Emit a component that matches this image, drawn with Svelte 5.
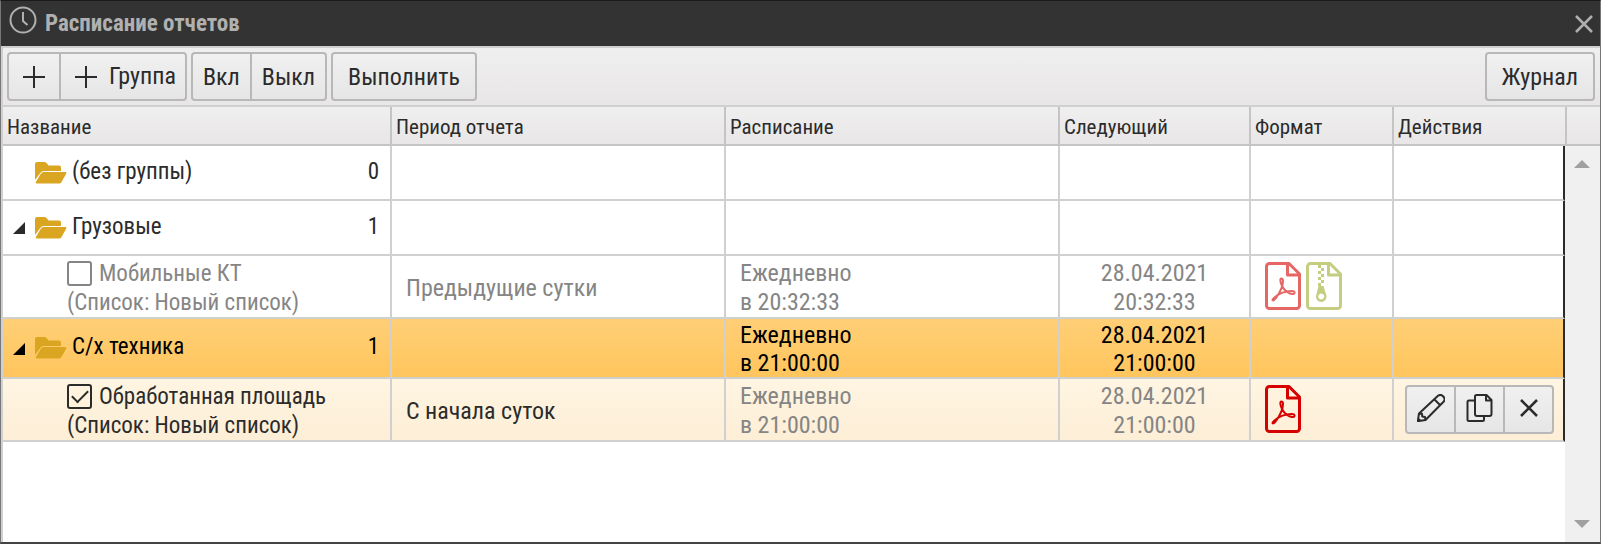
<script lang="ts">
    type Row = {
        kind: 'group' | 'item';
        name: string;
        count?: number;
        open?: boolean;
        list?: string;
        period?: string;
        time?: string;
        date?: string;
        formats?: string[];
        enabled?: boolean;
        selected?: boolean;
    };

    const columns = [
        { title: 'Название', cls: 'c-name' },
        { title: 'Период отчета', cls: 'c-period' },
        { title: 'Расписание', cls: 'c-schedule' },
        { title: 'Следующий', cls: 'c-next' },
        { title: 'Формат', cls: 'c-format' },
        { title: 'Действия', cls: 'c-actions' }
    ];

    let rows: Row[] = $state([
        { kind: 'group', name: '(без группы)', count: 0 },
        { kind: 'group', name: 'Грузовые', count: 1, open: true },
        {
            kind: 'item', name: 'Мобильные КТ', list: 'Новый список', period: 'Предыдущие сутки',
            time: '20:32:33', date: '28.04.2021', formats: ['pdf', 'zip'], enabled: false
        },
        {
            kind: 'group', name: 'С/х техника', count: 1, open: true,
            time: '21:00:00', date: '28.04.2021', selected: true
        },
        {
            kind: 'item', name: 'Обработанная площадь', list: 'Новый список', period: 'С начала суток',
            time: '21:00:00', date: '28.04.2021', formats: ['pdf'], enabled: true
        }
    ]);
</script>

{#snippet plus()}
    <svg class="plus" viewBox="0 0 22 22" aria-hidden="true"><path d="M11 0v22M0 11h22" /></svg>
{/snippet}

{#snippet pdf()}
    <svg class="file pdf" viewBox="0 0 36 48" aria-hidden="true">
        <path d="M4.500 1.500H24L34.500 12V43.500a3 3 0 0 1-3 3h-27a3 3 0 0 1-3-3v-39a3 3 0 0 1 3-3z" stroke-width="3" />
        <path d="M22.500 1.500V13H34.500" stroke-width="3" />
        <path d="M16.500 16.500C14.800 16.200 15 20 17 24C19.500 29 24.500 32.500 28 32C30.500 31.500 30 29 27 29C21 29 14 31.500 9.500 35.500C5.500 39 8.500 39.500 11 36C14.500 31 18 23.500 18 19C18 17.300 17.500 16.500 16.500 16.500z" stroke-width="2" />
    </svg>
{/snippet}

{#snippet zip()}
    <svg class="file zip" viewBox="0 0 36 48" aria-hidden="true">
        <path d="M4.500 1.500H24L34.500 12V43.500a3 3 0 0 1-3 3h-27a3 3 0 0 1-3-3v-39a3 3 0 0 1 3-3z" stroke-width="3" />
        <path d="M22.500 1.500V13H34.500" stroke-width="3" />
        <path class="fill" d="M12 3h3v3h-3zM15 6h3v3h-3zM12 9h3v3h-3zM15 12h3v3h-3zM12 15h3v3h-3zM15 18h3v3h-3zM12 21h3v3h-3z" />
        <path class="fill" fill-rule="evenodd" d="M12.500 24h5l3 10a5.300 5.300 0 1 1-10.500 0zM15.200 31.500a3 3 0 1 0 .1 0z" />
    </svg>
{/snippet}

<div class="window">
    <header class="titlebar">
        <svg class="clock" viewBox="0 0 28 28" aria-hidden="true">
            <circle cx="14" cy="14" r="12.500" />
            <path d="M14 6v9l4.500 4" />
        </svg>
        <h1>Расписание отчетов</h1>
        <button class="close" aria-label="Закрыть">
            <svg class="cross" viewBox="0 0 18 18" aria-hidden="true"><path d="M1 1l16 16M17 1L1 17" /></svg>
        </button>
    </header>

    <div class="toolbar">
        <div class="btn-group">
            <button class="btn" aria-label="Добавить">{@render plus()}</button>
            <button class="btn add-group">{@render plus()}Группа</button>
        </div>
        <div class="btn-group narrow">
            <button class="btn">Вкл</button>
            <button class="btn">Выкл</button>
        </div>
        <button class="btn">Выполнить</button>
        <button class="btn journal">Журнал</button>
    </div>

    <div class="grid">
        <div class="table-area">
            <table>
                <thead>
                    <tr>
                        {#each columns as col}
                            <th class={col.cls}>{col.title}</th>
                        {/each}
                    </tr>
                </thead>
                <tbody>
                    {#each rows as row}
                        <tr class={row.kind} class:selected={row.selected} class:enabled={row.enabled}>
                            <td class="name">
                                {#if row.kind === 'group'}
                                    <div class="group-name">
                                        <svg class="arrow" viewBox="0 0 12 12" aria-hidden="true">
                                            {#if row.open}<path d="M12 0v12H0z" />{/if}
                                        </svg>
                                        <svg class="folder" viewBox="0 0 32 22" aria-hidden="true">
                                            <path d="M0 18V2Q0 0 2 0H9.500Q11 0 12 1.500L13.500 3.500H24Q26 3.500 26 5.500V9H9Q6.500 9 5.300 11z" />
                                            <path d="M1.500 21.500Q0 21.500 1 19.800L6 11.500Q6.800 10 8.500 10H30.500Q32 10 31.200 11.700L26.500 20Q25.500 21.500 24 21.500z" />
                                        </svg>
                                        <span>{row.name}</span>
                                        <span class="count">{row.count}</span>
                                    </div>
                                {:else}
                                    <div class="item-name">
                                        <label>
                                            <input type="checkbox" bind:checked={row.enabled} />
                                            <span>{row.name}</span>
                                        </label>
                                        <div>(Список: {row.list})</div>
                                    </div>
                                {/if}
                            </td>
                            <td class="period">{row.period ?? ''}</td>
                            <td class="schedule">
                                {#if row.time}Ежедневно<br />в {row.time}{/if}
                            </td>
                            <td class="next">
                                {#if row.time}{row.date}<br />{row.time}{/if}
                            </td>
                            <td class="icons">
                                <div class="formats">
                                    {#each row.formats ?? [] as format}
                                        {#if format === 'pdf'}{@render pdf()}{:else}{@render zip()}{/if}
                                    {/each}
                                </div>
                            </td>
                            <td class="icons actions">
                                {#if row.kind === 'item' && row.enabled}
                                    <div class="btn-group tools">
                                        <button class="btn" aria-label="Изменить">
                                            <svg class="tool" viewBox="0 0 28 28" aria-hidden="true">
                                                <path d="M.8 27.200L2 19.500L21 1.800Q23.500 -.2 26 2.200Q28.800 5 26.800 7.500L8.500 26zM17.500 5.500L23 11M2 19.500L5 19.800L5.200 22.500L8 23L8.500 26M1.500 25L3 26.500" />
                                            </svg>
                                        </button>
                                        <button class="btn" aria-label="Копировать">
                                            <svg class="tool" viewBox="0 0 28 28" aria-hidden="true">
                                                <path d="M10.500 1H20.500L25.500 6V20Q25.500 22 23.500 22H11Q9 22 9 20V2.500Q9 1 10.500 1zM20 1V6.500H25.500M9 6.500H3Q1.500 6.500 1.500 8V25.500Q1.500 27 3 27H16.500Q18 27 18 25.500V22" />
                                            </svg>
                                        </button>
                                        <button class="btn" aria-label="Удалить">
                                            <svg class="cross" viewBox="0 0 18 18" aria-hidden="true"><path d="M1 1l16 16M17 1L1 17" /></svg>
                                        </button>
                                    </div>
                                {/if}
                            </td>
                        </tr>
                    {/each}
                </tbody>
            </table>
        </div>
        <div class="gutter">
            <div class="gutter-head"></div>
            <div class="scrollbar">
                <svg viewBox="0 0 16 8" aria-hidden="true"><path d="M8 0l8 8H0z" /></svg>
                <svg viewBox="0 0 16 8" aria-hidden="true"><path d="M0 0h16L8 8z" /></svg>
            </div>
        </div>
    </div>
</div>

<style>
    :global(body) {
        margin: 0;
        background: #fff;
    }

    .window {
        display: flex;
        flex-direction: column;
        box-sizing: border-box;
        min-height: 100vh;
        border: 1px solid #777;
        border-top-color: #1a1a1a;
        border-bottom: 2px solid #444;
        color: #2b2b2b;
        font-family: 'Roboto Condensed', 'Liberation Sans Narrow', Roboto, sans-serif;
        font-size: 24px;
        line-height: 29px;
    }

    svg {
        display: block;
        flex: none;
        fill: none;
        stroke: currentColor;
        stroke-width: 2;
    }

    button {
        font: inherit;
        color: inherit;
        cursor: pointer;
    }

    .cross {
        width: 18px;
        height: 18px;
        stroke-width: 2.5;
    }

    /* title */
    .titlebar {
        display: flex;
        align-items: center;
        gap: 8px;
        height: 45px;
        padding: 0 7px 0 8px;
        background: #333;
        color: #b0b0b0;
    }

    .titlebar h1 {
        flex: 1;
        margin: 0;
        font-size: 23px;
        font-weight: 700;
    }

    .clock {
        width: 28px;
        height: 28px;
        margin-bottom: 7px;
    }

    .close {
        padding: 0;
        border: 0;
        background: none;
    }

    /* toolbar */
    .toolbar {
        display: flex;
        gap: 4px;
        padding: 4px 5px 4px 4px;
        border: solid #d0d0d0;
        border-width: 2px 0 2px 2px;
        background: linear-gradient(#f0eff0, #e8e6e7);
    }

    .btn {
        display: flex;
        align-items: center;
        gap: 12px;
        box-sizing: border-box;
        height: 49px;
        padding: 2px 15px 0;
        border: 2px solid #b8b8b8;
        border-radius: 4px;
        background: linear-gradient(#f0f0f0, #e6e6e6);
    }

    .journal {
        margin-left: auto;
    }

    .btn-group {
        display: flex;
    }

    .btn-group .btn {
        padding: 0 14px;
    }

    .btn-group .add-group {
        padding-right: 9px;
    }

    .btn-group.narrow .btn {
        padding: 2px 10px 0;
    }

    .btn-group .btn:not(:first-child) {
        margin-left: -2px;
        border-top-left-radius: 0;
        border-bottom-left-radius: 0;
    }

    .btn-group .btn:not(:last-child) {
        border-top-right-radius: 0;
        border-bottom-right-radius: 0;
    }

    .plus {
        width: 22px;
        height: 22px;
    }

    /* table */
    .grid {
        display: flex;
        flex: 1;
        border-left: 2px solid #d0d0d0;
    }

    .table-area {
        flex: 1;
        background: #fff;
    }

    table {
        width: 100%;
        table-layout: fixed;
        border-spacing: 0;
    }

    th {
        box-sizing: border-box;
        height: 39px;
        padding: 3px 4px 0;
        border-right: 2px solid #c4c4c4;
        border-bottom: 2px solid #c4c4c4;
        background: linear-gradient(#f0eff0, #e8e6e7);
        font-size: 21px;
        font-weight: 400;
        text-align: left;
    }

    th:last-child {
        border-right: 0;
    }

    .c-name { width: 389px; }
    .c-next { width: 191px; }
    .c-format { width: 143px; }
    .c-actions { width: 171px; }

    td {
        box-sizing: border-box;
        height: 55px;
        padding: 2px 0 0;
        border-right: 2px solid #d0d0d0;
        border-bottom: 2px solid #d0d0d0;
    }

    td:last-child {
        border-right-color: #2b2b2b;
    }

    .name {
        font-size: 23px;
    }

    .item td {
        height: 63px;
        padding-top: 3px;
        color: #858585;
    }

    .item .icons {
        padding: 0 0 1px;
    }

    .selected td {
        height: 60px;
        background: linear-gradient(#ffcf76, #ffc55d);
        color: #000;
        line-height: 28px;
    }

    .enabled td {
        background: linear-gradient(#fff5e2, #fdeed6);
    }

    .enabled .name,
    .enabled .period,
    .enabled .actions {
        color: #2b2b2b;
    }

    .group-name {
        display: flex;
        align-items: center;
        padding: 0 11px 4px 10px;
    }

    .arrow {
        width: 12px;
        height: 12px;
        margin: 3px 10px 0 0;
        fill: currentColor;
        stroke: none;
    }

    .folder {
        width: 32px;
        height: 22px;
        margin: 2px 5px 0 0;
        fill: #daa520;
        stroke: none;
    }

    .count {
        margin-left: auto;
    }

    .item-name {
        padding-left: 64px;
        white-space: nowrap;
    }

    .item-name label {
        display: flex;
        align-items: center;
        gap: 7px;
    }

    input {
        appearance: none;
        display: grid;
        place-items: center;
        box-sizing: border-box;
        width: 25px;
        height: 25px;
        margin: 0;
        border: 2px solid currentColor;
        border-radius: 3px;
        color: inherit;
    }

    input:checked::before {
        content: '';
        box-sizing: border-box;
        width: 16px;
        height: 9px;
        margin-bottom: 5px;
        border: solid currentColor;
        border-width: 0 0 2px 2px;
        transform: rotate(-45deg);
    }

    td.period,
    td.schedule {
        padding-left: 14px;
    }

    .next {
        text-align: center;
    }

    .formats {
        display: flex;
        gap: 5px;
        padding-left: 14px;
    }

    .file {
        width: 36px;
        height: 48px;
        stroke-linejoin: round;
        opacity: 0.6;
    }

    .enabled .file {
        opacity: 1;
    }

    .pdf {
        color: #d60000;
    }

    .zip {
        color: #a0ad2f;
    }

    .zip .fill {
        fill: currentColor;
        stroke: none;
    }

    .tools {
        padding-left: 11px;
    }

    .btn-group.tools .btn {
        flex: none;
        justify-content: center;
        width: 51px;
        padding: 0 0 2px;
    }

    .tool {
        width: 28px;
        height: 28px;
        stroke-linejoin: round;
    }

    /* scroll gutter */
    .gutter {
        display: flex;
        flex-direction: column;
        width: 35px;
    }

    .gutter-head {
        box-sizing: border-box;
        height: 39px;
        border-left: 2px solid #c4c4c4;
        border-bottom: 2px solid #c4c4c4;
        background: linear-gradient(#f0eff0, #e8e6e7);
    }

    .scrollbar {
        display: flex;
        flex: 1;
        flex-direction: column;
        align-items: center;
        justify-content: space-between;
        padding: 14px 2px 14px 0;
        background: #f0f0f0;
    }

    .scrollbar svg {
        width: 16px;
        height: 8px;
        fill: #a0a0a0;
        stroke: none;
    }
</style>
